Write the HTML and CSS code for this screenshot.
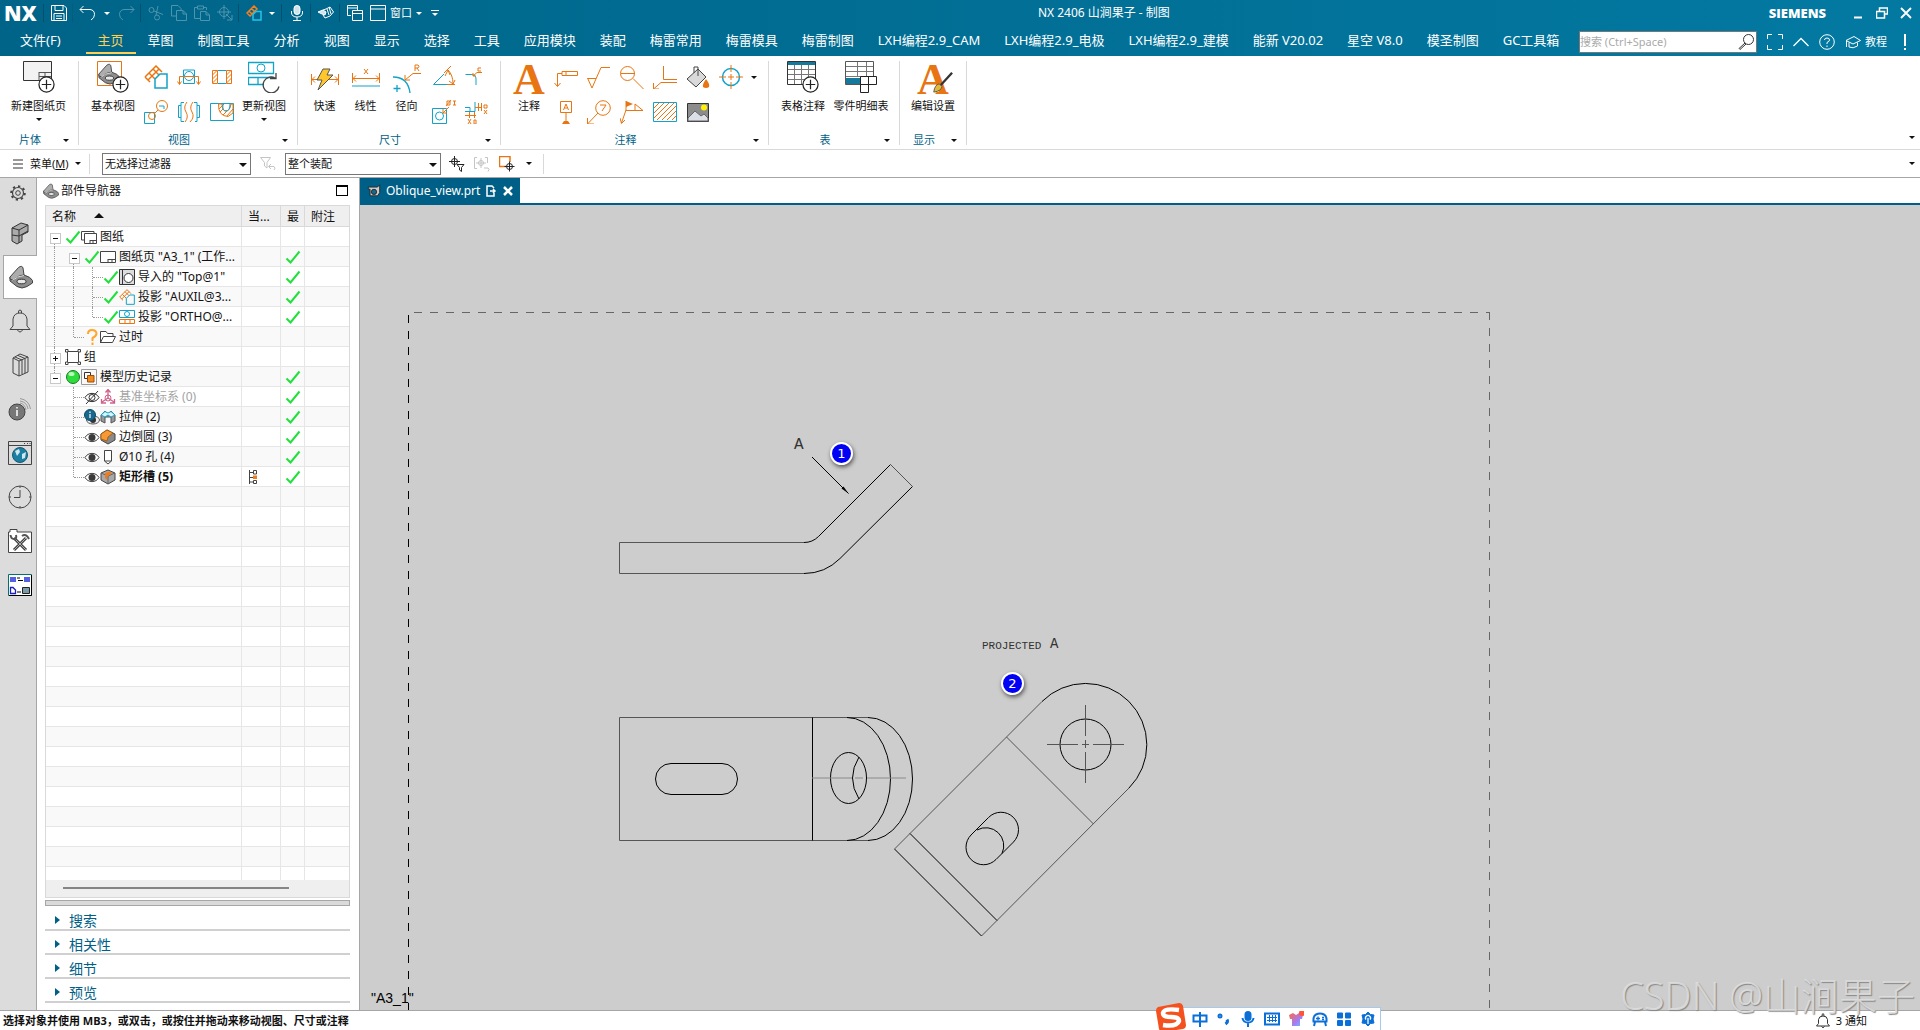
FILE: index.html
```html
<!DOCTYPE html>
<html lang="zh-CN">
<head>
  <meta charset="UTF-8">
  <meta name="viewport" content="width=device-width, initial-scale=1">
  <title>NX 2406 山涧果子 - 制图</title>
  <link rel="stylesheet" href="styles.css">
</head>
<body>
  <!-- shared icons -->
  <svg class="defs" width="0" height="0">
    <symbol id="check" viewBox="0 0 16 16"><path d="M1.500 9.500 5.500 13.500 14.500 2.500" fill="none" stroke="#22e03c" stroke-width="2"/></symbol>
    <symbol id="eye" viewBox="0 0 16 16"><path d="M1 8.500C4 3 12 3 15 8.500 12 14 4 14 1 8.500Z" fill="#fff" stroke="#444"/><circle cx="8" cy="8.500" r="3.500" fill="#3a3a3a"/></symbol>
    <symbol id="part" viewBox="0 0 24 24"><path d="M1 12 15 10Q22 12 23.500 15.500V18L18 21.500Q13 24.500 8 21.500L1 16Z" fill="#8d8d8d" stroke="#444"/><path d="M1 12 9.500 2.500Q13 0 14 3L15 10Q8 10.500 4.500 15.500L1 14Z" fill="#adadad" stroke="#444"/><path d="M3.500 15.500Q8 11 15 10.500" fill="none" stroke="#ddd"/><ellipse cx="12.500" cy="16.500" rx="4.500" ry="2.300" fill="#e8e8e8" stroke="#333"/></symbol>
    <symbol id="auxil" viewBox="0 0 24 24"><path d="M1 12 12 1 18 7M1 12 6 17M4 15 15 4M5 8 11 14M9 4 15 10" fill="none" stroke="#e87511" stroke-width="1.500"/><path d="M11 14 16 9H23V23H11Z" fill="none" stroke="#13a3c9" stroke-width="1.500"/></symbol>
    <symbol id="plusball" viewBox="0 0 18 18"><circle cx="9" cy="9" r="8" fill="#fff" stroke="#222" stroke-width="1.300"/><path d="M9 4V14M4 9H14" stroke="#222" stroke-width="1.300"/></symbol>
  </svg>

  <div class="app">
    <header class="top">
      <div class="titlebar">
        <span class="nx">NX</span>
        <i class="sep"></i>
        <button class="qa" aria-label="保存"><svg viewBox="0 0 16 16"><path d="M.5.5H13L15.500 3V15.500H.5ZM4 .5V5.500H12V.5M3 15V8.500H13V15M5 11H11M5 13.500H11"/></svg></button>
        <i class="sep faint"></i>
        <button class="qa" aria-label="撤消"><svg viewBox="0 0 16 16"><path d="M4.500 1 1 4.500 4.500 8M1 4.500H11Q15.500 5 15.500 9.500 15.500 13 12 15"/></svg></button>
        <button class="drop"><i class="caret"></i></button>
        <button class="qa dim" aria-label="重做"><svg viewBox="0 0 16 16"><path d="M11.500 1 15 4.500 11.500 8M15 4.500H5Q.5 5 .5 9.500 .5 13 4 15"/></svg></button>
        <i class="sep"></i>
        <button class="qa dim" aria-label="剪切"><svg viewBox="0 0 16 16"><circle cx="3.500" cy="5" r="2.500"/><circle cx="9" cy="12.500" r="2.500"/><path d="M6 6 15 9.500M8 10 10 1"/></svg></button>
        <button class="qa dim" aria-label="复制"><svg viewBox="0 0 16 16"><path d="M5 11H.5V.5H7L10 3.500V5M5.500 5.500H12L15.500 9V15.500H5.500ZM12 5.500V9H15.500"/></svg></button>
        <button class="qa dim" aria-label="粘贴"><svg viewBox="0 0 16 16"><path d="M6 13.500H.5V2.500H3M10 2.500H12.500V5M3.500 1H9.500V4H3.500ZM6.500 6.500H12L15.500 10V15.500H6.500ZM12 6.500V10H15.500"/></svg></button>
        <button class="qa dim" aria-label="重复"><svg viewBox="0 0 16 16"><circle cx="7" cy="7" r="4.500"/><path d="M7 0V14M0 7H14M9 9 15 15M15 10V15H10"/></svg></button>
        <i class="sep"></i>
        <button class="qa"><svg viewBox="0 0 16 16"><path d="M1 8 8 1 11 4 4 11ZM3 6 6 9M5.500 3.500 8.500 6.500" stroke="#f58220" stroke-width="1.500"/><path d="M7 9.500 10 6.500H15V15H7Z" stroke="#22c3ee" stroke-width="1.500"/></svg></button>
        <button class="drop narrow"><i class="caret"></i></button>
        <i class="sep"></i>
        <button class="qa" aria-label="语音"><svg viewBox="0 0 16 16"><rect x="5" y=".5" width="6" height="9" rx="3" fill="#cfe3ea"/><path d="M2.500 6V8Q3 12 8 12T13.500 8V6M8 12V15M4 15.500H12"/></svg></button>
        <i class="sep"></i>
        <button class="qa" aria-label="触摸"><svg viewBox="0 0 16 16"><path d="M0 7 5 5 8 7 7 10 4 9Z" fill="#cfe3ea"/><path d="M5 5 8 4 12 2 15.500 7 12 11 7 13 5 10M11 2 13 9M9 4 11 10"/></svg></button>
        <i class="sep"></i>
        <button class="qa" aria-label="层叠"><svg viewBox="0 0 16 16"><path d="M4 10.500H.5V.5H10.500V5M.5 3H10.500M5.500 5.500H15.500V15.500H5.500ZM5.500 8.500H15.500"/></svg></button>
        <button class="qa win"><svg viewBox="0 0 16 16"><path d="M.5.5H15.500V15.500H.5ZM.5 4H15.500"/></svg>窗口</button>
        <button class="drop narrow"><i class="caret"></i></button>
        <button class="drop"><i class="bar"></i><i class="caret"></i></button>
        <h1>NX 2406 山涧果子 - 制图</h1>
        <span class="siemens">SIEMENS</span>
        <div class="wincontrols">
          <button aria-label="最小化"><svg viewBox="0 0 12 12"><path d="M2 10.500H10" stroke-width="2"/></svg></button>
          <button aria-label="还原"><svg viewBox="0 0 12 12"><path d="M3.500 4V1H11.500V7H9M.5 4.500H8.500V11H.5Z" stroke-width="1.500"/></svg></button>
          <button aria-label="关闭"><svg viewBox="0 0 12 12"><path d="M1 1 11 11M11 1 1 11" stroke-width="1.800"/></svg></button>
        </div>
      </div>

      <nav class="tabs">
        <button class="file">文件(F)</button>
        <button class="active">主页</button>
        <button>草图</button>
        <button>制图工具</button>
        <button>分析</button>
        <button>视图</button>
        <button>显示</button>
        <button>选择</button>
        <button>工具</button>
        <button>应用模块</button>
        <button>装配</button>
        <button>梅雷常用</button>
        <button>梅雷模具</button>
        <button>梅雷制图</button>
        <button>LXH编程2.9_CAM</button>
        <button>LXH编程2.9_电极</button>
        <button>LXH编程2.9_建模</button>
        <button>能新 V20.02</button>
        <button>星空 V8.0</button>
        <button>模圣制图</button>
        <button>GC工具箱</button>
        <div class="tools">
          <label class="search">
            <input type="text" placeholder="搜索 (Ctrl+Space)" aria-label="搜索">
            <svg viewBox="0 0 16 16"><circle cx="10.500" cy="5.500" r="5"/><path d="M7 9 1 14.500 2 15.500 8 10"/></svg>
          </label>
          <button aria-label="全屏"><svg viewBox="0 0 16 16"><path d="M.5 5V.5H5M11 .5H15.500V5M15.500 11V15.500H11M5 15.500H.5V11"/></svg></button>
          <button aria-label="折叠"><svg viewBox="0 0 16 16"><path d="M.5 12 8 4.500 15.500 12" stroke-width="1.300"/></svg></button>
          <button aria-label="帮助"><svg viewBox="0 0 16 16"><circle cx="8" cy="8" r="7.300"/><path d="M5.500 6Q5.500 4 8 4T10.500 6Q10.500 7.500 8 8.500V10M8 11.500V13"/></svg></button>
          <button class="learn"><svg viewBox="0 0 16 16"><path d="M1 6.500 9 2.500 15.500 6.500 8 10ZM4 8.500V13Q8 15 12.500 12V8.500M1.500 7V13"/></svg>教程</button>
          <button aria-label="提醒"><svg viewBox="0 0 16 16"><path d="M8 0V12M8 14V16" stroke-width="2"/></svg></button>
        </div>
      </nav>
    </header>

    <div class="ribbon">
      <section class="group sheet">
        <div class="cmds">
          <button class="big"><svg viewBox="0 0 32 32"><path d="M.5.5H28.500V19.500H.5Z" fill="#f2f2f2" stroke="#333"/><path d="M16 11.500H28M16 15.500H28M16 11V19M22 11V15" stroke="#555"/><use href="#plusball" x="15" y="15" width="17" height="17"/></svg>新建图纸页<i class="caret"></i></button>
        </div>
        <footer><span>片体</span><i class="caret"></i></footer>
      </section>
      <section class="group views">
        <div class="cmds">
          <button class="big w52"><svg viewBox="0 0 32 32"><path d="M.5.5H24.500V24.500H.5Z" fill="#fff" stroke="#e87511"/><use href="#part" x="1" y="2" width="22" height="22"/><use href="#plusball" x="15" y="15" width="17" height="17"/></svg>基本视图</button>
          <div class="grid">
            <button><svg viewBox="0 0 24 24"><use href="#auxil"/></svg></button>
            <button><svg viewBox="0 0 24 24"><path class="c" d="M6.500 5V18.500H17.500V5Z"/><circle class="c" cx="12" cy="11" r="4.500"/><path class="o" d="M2.500 19V11.500H21.500V19M.5 16.500 2.500 19.500 4.500 16.500M19.500 16.500 21.500 19.500 23.500 16.500"/></svg></button>
            <button><svg viewBox="0 0 24 24"><path class="o" d="M2.500 5.500H7.500V18.500H2.500ZM16.500 5.500H21.500V18.500H16.500ZM2.500 10 7 5.500M2.500 14 7.500 9M2.500 18 7.500 13M16.500 10 21 5.500M16.500 14 21.500 9M16.500 18 21.500 13"/><path class="c" d="M8 5.500H16M8 18.500H16"/></svg></button>
            <button><svg viewBox="0 0 24 24"><path class="c" d="M.5 12.500H10.500V23.500H.5ZM15 6H20V9"/><circle class="o" cx="18" cy="6" r="5.500"/><circle class="o" cx="8" cy="16" r="3.500"/><path class="o" d="M10.500 13.500 14 10"/></svg></button>
            <button><svg viewBox="0 0 24 24"><path class="c" d="M4 5.500H1.500V17.500H4M7 21.500H4V2.500H7M18 21.500H20V2.500H17M20 5.500H22.500V17.500H20"/><path class="o" d="M10 2Q6 7 9 12T8 22M16 2Q12 7 15 12T13 22"/></svg></button>
            <button><svg viewBox="0 0 24 24"><path class="c" d="M.5 3.500H23.500V20.500H.5Z"/><path class="o" d="M8.500 4Q8 16 18 16.500L23 13V4H21Q20 11 16 11T12 4ZM9 9 14 4M10 12 13 9M13 15 17 11M17 16 23 9"/><path class="c" d="M13 4Q12 11 16 11T20 4"/></svg></button>
          </div>
          <button class="big w52"><svg viewBox="0 0 32 32"><path class="c" d="M.5 1.500H25.500V12.500H.5ZM.5 16.500H25.500M.5 16V23.500H16M10 16V23" stroke-width="1.300"/><circle class="c" cx="13" cy="7" r="4"/><path d="M28 17.500A8 8 0 1 0 31 25.500M28 12V17.500H22" fill="none" stroke="#444" stroke-width="1.300"/></svg>更新视图<i class="caret"></i></button>
        </div>
        <footer><span>视图</span><i class="caret"></i></footer>
      </section>
      <section class="group">
        <div class="cmds">
          <button class="big w41"><svg viewBox="0 0 32 32"><path class="o" d="M2.500 13V24M29.500 13V24M3 18.500H29M6 15.500 3 18.500 6 21.500M26 15.500 29 18.500 26 21.500"/><path d="M14 8H21L18 14H24L9 29 13 19H8Z" fill="#ffc72c" stroke="#555"/></svg>快速</button>
          <button class="big w41"><svg viewBox="0 0 32 32"><path class="o" d="M2.500 12V22M29.500 12V22M3 17.500H29M6 14.500 3 17.500 6 20.500M26 14.500 29 17.500 26 20.500M14 8 18 13M18 8 14 13"/><path class="c" d="M2 25H30"/></svg>线性</button>
          <button class="big w41"><svg viewBox="0 0 32 32"><path class="o" d="M30 12.500H22L14 19M14 14V19H19M24 10V4H27Q29 5 27 7H24M26 7 28 10"/><path class="c" d="M2 16Q17 16 19 32M6 24V31M2.500 27.500H9.500" stroke-width="1.300"/></svg>径向</button>
          <div class="grid two">
            <button><svg viewBox="0 0 24 24"><path class="c" d="M12 9 1.500 19.500H15"/><path class="o" d="M12 8 19 1M16 5Q21 10 21 19M13 11 16 5 18 10M17 16 21 19 23 15M15 19.500H23"/></svg></button>
            <button><svg viewBox="0 0 24 24"><path class="c" d="M.5 9.500H6Q11 9.500 11 14V20"/><path class="o" d="M17 7.500H12L8 11M8 8V11H11M16 3H13V6H16"/></svg></button>
            <button><svg viewBox="0 0 24 24"><path class="c" d="M.5 8.500H14.500V23.500H.5Z"/><circle class="c" cx="7.500" cy="16" r="4"/><path class="o" d="M17 7 11 13M11 9V13H15M14 6 19 0M15 1H18V5H15ZM21 1H24M22.500 1V5M21 5H24"/></svg></button>
            <button><svg viewBox="0 0 24 24"><path class="c" d="M0 7.500H5V11.500H10V2M0 11.500H5"/><path class="o" d="M10 7.500H17M13.500 3V11M16.500 3V11M0 15.500H11M4.500 12V18M9.500 12V18M19 5H22V8H19ZM19 10 22 14M22 10 19 14M3 19 6 24M6 19 3 24M9 20H11V24H9Z"/></svg></button>
          </div>
        </div>
        <footer><span>尺寸</span><i class="caret"></i></footer>
      </section>
      <section class="group notes">
        <div class="cmds">
          <button class="big w40"><span class="bigA">A</span>注释</button>
          <div class="grid six">
            <button><svg viewBox="0 0 24 24"><path class="o" d="M8 6.500H23.500V10.500H8ZM12 6V10M8 8.500H3.500V21M.5 18 3.500 21.500 6.500 18"/></svg></button>
            <button><svg viewBox="0 0 24 24"><path class="o" d="M.5 13.500H9M.5 13 5 23 14 2.500H23"/></svg></button>
            <button><svg viewBox="0 0 24 24"><circle class="o" cx="7.500" cy="8.500" r="7"/><path class="o" d="M1 8.500H15M13 13.500 23.500 24"/></svg></button>
            <button><svg viewBox="0 0 24 24"><path class="o" d="M10.500 1V14.500H24M24 17.500H8L.5 24M.5 18V24H6"/></svg></button>
            <button><svg viewBox="0 0 24 24"><path d="M1 14 12 4 20 12 10 22Z" fill="#d9d9d9" stroke="#444"/><path d="M8 8V2H12V11" fill="none" stroke="#444"/><path d="M20 14Q16 20 17 22 20 24 23 22 24 19 20 14Z" fill="#e87511"/></svg></button>
            <button><svg viewBox="0 0 24 24"><circle class="c" cx="12" cy="12" r="8.500" stroke-width="1.500"/><path class="o" d="M12 0V7M12 17V24M0 12H7M17 12H24M12 9V15M9 12H15"/></svg></button>
            <button><svg viewBox="0 0 24 24"><path class="o" d="M6.500 1.500H17.500V12.500H6.500ZM12 13V21M9.500 10 12 4 14.500 10M10.500 8H13.500"/><path d="M8 24 10 21H14L16 24Z" fill="#e87511"/></svg></button>
            <button><svg viewBox="0 0 24 24"><circle class="o" cx="16" cy="8" r="7.300"/><path class="o" d="M11 13 .5 24M.5 18V24H7M13 5H19L15 11"/></svg></button>
            <button><svg viewBox="0 0 24 24"><path d="M6 1 13 4 6 7Z" fill="#e87511"/><path class="o" d="M6 1V10.500H23L15 4V10M6 10 1.500 23M0 18 1.500 23.500 5 20"/></svg></button>
            <button><svg viewBox="0 0 24 24"><path class="o" d="M1 8 6 3M1 13 11 3M1 18 16 3M4 20 21 3M9 20 23 6M14 20 23 11M19 20 23 16"/><path class="c" d="M.5 2.500H23.500V21.500H.5Z"/></svg></button>
            <button><svg viewBox="0 0 24 24"><path d="M1.500 3.500H22.500V21.500H1.500Z" fill="#8c8c8c" stroke="#333"/><path d="M2 18 9 11 15 16 18 14 22 18V21H2Z" fill="#dcdfe8" stroke="#666"/><circle cx="18" cy="7.500" r="3" fill="#fff200"/></svg></button>
          </div>
          <button class="more" aria-label="更多"><i class="caret"></i></button>
        </div>
        <footer><span>注释</span><i class="caret"></i></footer>
      </section>
      <section class="group tables">
        <div class="cmds">
          <button class="big w58"><svg viewBox="0 0 32 32"><path d="M.5.5H28.500V23.500H.5Z" fill="#fff" stroke="#333"/><path d="M1 1H28V4H1Z" fill="#16799c"/><path d="M1 8.500H28M1 13.500H28M1 18.500H28M7.500 4V23M14.500 4V23M21.500 4V23" stroke="#777"/><use href="#plusball" x="15" y="15" width="17" height="17"/></svg>表格注释</button>
          <button class="big w58"><svg viewBox="0 0 32 32"><path d="M.5.5H28.500V23.500H.5Z" fill="#fff" stroke="#555"/><path d="M1 17H15V23H1Z" fill="#16799c"/><path d="M1 5.500H28M1 10.500H28M1 15.500H28M12.500 1V15M21.500 1V15" stroke="#777"/><path d="M15.500 15.500H31.500V23.500H15.500ZM15.500 23.500H23.500V31.500H15.500ZM23.500 15V23" fill="#fff" stroke="#222"/></svg>零件明细表</button>
        </div>
        <footer><span>表</span><i class="caret"></i></footer>
      </section>
      <section class="group display">
        <div class="cmds">
          <button class="big w58"><span class="bigA">A</span><svg class="brush" viewBox="0 0 24 24"><path d="M23 2 10 16" stroke="#333" stroke-width="2.500"/><path d="M3 23Q4 15 9 14L12 17Q11 22 3 23Z" fill="#e2b93b" stroke="#555"/></svg>编辑设置</button>
        </div>
        <footer><span>显示</span><i class="caret"></i></footer>
      </section>
      <button class="ribbonmore" aria-label="功能区选项"><i class="caret"></i></button>
    </div>

    <div class="selbar">
      <button class="menu"><svg viewBox="0 0 10 10"><path d="M0 1H10M0 5H10M0 9H10" stroke="#333"/></svg>菜单(<u>M</u>)<i class="caret"></i></button>
      <i class="vsep"></i>
      <span class="combo filter"><select aria-label="选择过滤器"><option>无选择过滤器</option></select></span>
      <button class="selicon gray"><svg viewBox="0 0 16 16"><path d="M.5 1.500H10.500L7 6.500V12L4.500 10V6.500ZM9 10.500H14Q16 12 14 14M11 8 8.500 10.500 11 13"/></svg></button>
      <span class="combo scope"><select aria-label="选择范围"><option>整个装配</option></select></span>
      <button class="selicon"><svg viewBox="0 0 16 16"><circle cx="5.500" cy="5.500" r="3"/><path d="M5.500 0V11M0 5.500H11M8 8.500H15L12.500 11.500V15.500L10.500 14V11.500Z"/></svg></button>
      <button class="selicon gray"><svg viewBox="0 0 16 16"><path d="M3 1.500H.5V12.500H3M11 1.500H13.500V7M10 12H14Q16 13 14 15.500"/><circle cx="7" cy="7" r="2.500"/><path d="M7 2V12M2 7H12"/></svg></button>
      <button class="selicon"><svg viewBox="0 0 16 16"><path class="o" d="M7 10.500H.5V.5H11V6" stroke-width="1.500"/><circle cx="10.500" cy="10.500" r="3"/><path d="M10.500 5.500V15.500M5.500 10.500H15.500"/></svg></button>
      <button class="drop"><i class="caret"></i></button>
      <i class="vsep"></i>
      <button class="drop last"><i class="caret"></i></button>
    </div>

    <main>
      <aside class="rail">
        <button class="gear" aria-label="设置"><svg viewBox="0 0 16 16"><circle cx="8" cy="8" r="5.500" stroke-width="1.200"/><circle cx="8" cy="8" r="6.800" stroke-width="2" stroke-dasharray="2.300 3"/><circle cx="8" cy="8" r="2.300"/></svg></button>
        <button><svg viewBox="0 0 24 24"><path d="M4 7 13 2 20 4V11L14 14V20L9 23 4 20Z" fill="#aaa" stroke="#333"/><path d="M4 7 11 9 20 4M11 9V22M4 14 11 15 20 10" fill="none" stroke="#333"/></svg></button>
        <button class="on"><svg viewBox="0 0 24 24"><use href="#part"/></svg></button>
        <button aria-label="通知"><svg viewBox="0 0 24 24"><path d="M2 20.500H22L19 17V10Q18 4 12 4T5 10V17L2 20.500M9.500 21Q12 25 14.500 21M10.500 4Q10 1 12 1T13.500 4"/></svg></button>
        <button><svg viewBox="0 0 24 24"><path d="M5 5 11 8V23L5 20ZM5 5 12 1 20 4V19L11 23M11 8 20 4M7 4 14 7V21M10 2.500 17 5.500V20"/></svg></button>
        <button><svg viewBox="0 0 24 24"><circle cx="9" cy="15" r="8" fill="#777"/><path d="M9 13V19M9 10V11.500" stroke="#fff" stroke-width="1.500"/><path d="M12 6Q17 7 18 13M12 4Q19 5 20 12M12 1.500Q21 3 22.500 12" stroke="#999"/></svg></button>
        <button><svg viewBox="0 0 24 24"><path d="M.5.5H23.500V23.500H.5ZM.5 4.500H23.500M16 2.500H17M19 2.500H20M21.500 2.500H22.500"/><circle cx="12" cy="14" r="7.500" fill="#1d7ea3" stroke="#155a75"/><path d="M7 10 11 8 12 11 9 15ZM14 13 18 11 17 17 14 18Z" fill="#cfe8f0" stroke="none"/></svg></button>
        <button aria-label="历史记录"><svg viewBox="0 0 24 24"><circle cx="12" cy="12" r="11"/><path d="M12 5V12.500H6M12 1V3M12 21V23M1 12H3M21 12H23"/></svg></button>
        <button><svg viewBox="0 0 24 24"><path d="M.5 3V23.500H23.500V3H9V.5H2V3Z" fill="#fff"/><path d="M6 9 18 21M18 9 6 21" stroke="#444" stroke-width="3"/><path d="M6 9 18 21M18 9 6 21" stroke="#aaa"/><path d="M2.500 6Q3 10 6 10T8 6M14 7Q18 4 21 10" stroke="#555" stroke-width="2"/></svg></button>
        <button><svg viewBox="0 0 24 24"><path d="M.5 1.500H23.500V22.500H.5Z" fill="#fff" stroke="#007070"/><path d="M1 22.500H23.500V2" stroke="#000"/><path d="M2 4H8V9H2ZM16 4H22V9H16Z" fill="#5560e0" stroke="none"/><path d="M9 5H12M10 7.500H15M9 19H13" stroke="#000"/><path d="M2.500 14.500H5L7.500 17V20.500H2.500Z" fill="#fff" stroke="#1c1cc0" stroke-width="1.300"/><path d="M14.500 14.500H21.500V20.500H14.500Z" fill="#7b9aa8" stroke="#222"/></svg></button>
      </aside>

      <section class="navigator">
        <div class="navhead"><svg viewBox="0 0 24 24"><use href="#part"/></svg><h2>部件导航器</h2><button aria-label="最大化"></button></div>
        <div class="treebox">
          <div class="treescroll">
            <table>
              <colgroup><col><col class="c2"><col class="c3"><col class="c4"></colgroup>
              <thead><tr><th>名称<i class="sort"></i></th><th>当...</th><th>最</th><th>附注</th></tr></thead>
              <tbody>
                <tr><td><div class="node"><i class="g box first"></i><svg><use href="#check"/></svg><svg viewBox="0 0 16 16"><path d="M3 11H.5V2.500H13V4" fill="none" stroke="#444"/><path d="M3.500 4.500H15.500V14.500H3.500ZM9 11.500H15M9 11V14M12 11V14" fill="#fff" stroke="#444"/></svg><span>图纸</span></div></td><td></td><td></td><td></td></tr>
                <tr><td><div class="node"><i class="g v"></i><i class="g box first"></i><svg><use href="#check"/></svg><svg viewBox="0 0 16 16"><path d="M.5 2.500H15.500V13.500H.5ZM8 10.500H15M8 10V13M12 10V13" fill="#fff" stroke="#444"/></svg><span>图纸页 "A3_1" (工作...</span></div></td><td></td><td><svg><use href="#check"/></svg></td><td></td></tr>
                <tr><td><div class="node"><i class="g v"></i><i class="g v"></i><i class="g v t"></i><svg><use href="#check"/></svg><svg viewBox="0 0 16 16"><path d="M.5.5H15.500V15.500H.5Z" fill="#ddd" stroke="#333"/><path d="M3.500 1V15" stroke="#333"/><circle cx="9.500" cy="9" r="4.500" fill="#fff" stroke="#333"/></svg><span>导入的 "Top@1"</span></div></td><td></td><td><svg><use href="#check"/></svg></td><td></td></tr>
                <tr><td><div class="node"><i class="g v"></i><i class="g v"></i><i class="g v t"></i><svg><use href="#check"/></svg><svg viewBox="0 0 24 24"><use href="#auxil"/></svg><span>投影 "AUXIL@3...</span></div></td><td></td><td><svg><use href="#check"/></svg></td><td></td></tr>
                <tr><td><div class="node"><i class="g v"></i><i class="g v"></i><i class="g v l t"></i><svg><use href="#check"/></svg><svg viewBox="0 0 16 16"><path class="c" d="M.5 1.500H15.500V8.500H.5Z"/><circle class="c" cx="8" cy="5" r="2.500"/><path class="o" d="M.5 10.500H15.500V14.500H.5ZM6 10V14M11 10V14"/></svg><span>投影 "ORTHO@...</span></div></td><td></td><td><svg><use href="#check"/></svg></td><td></td></tr>
                <tr><td><div class="node"><i class="g v"></i><i class="g v l t"></i><svg viewBox="0 0 16 16"><path d="M4 5Q4 1 8 1T12.500 4.500Q12.500 7 8.500 9V12M8.500 13.500V16" fill="none" stroke="#ffa72b" stroke-width="2"/></svg><svg viewBox="0 0 16 16"><path d="M.5 14V2.500H6L7.500 4.500H13V7M.5 13.500 3.500 7.500H15.500L12.500 13.500Z" fill="#fff" stroke="#444"/></svg><span>过时</span></div></td><td></td><td></td><td></td></tr>
                <tr><td><div class="node"><i class="g box plus"></i><svg viewBox="0 0 16 16"><path d="M2.500 2.500H13.500V13.500H2.500Z" fill="none" stroke="#444"/><path d="M.5.5H3V3H.5ZM13 .5H15.500V3H13ZM.5 13H3V15.500H.5ZM13 13H15.500V15.500H13Z" fill="#fff" stroke="#444"/></svg><span>组</span></div></td><td></td><td></td><td></td></tr>
                <tr><td><div class="node"><i class="g box end"></i><svg viewBox="0 0 16 16"><circle cx="8" cy="8" r="6.500" fill="#2fdc3d" stroke="#187a20"/><ellipse cx="6.500" cy="5" rx="3" ry="2" fill="#b6ffb9"/></svg><svg viewBox="0 0 16 16"><path d="M.5.5H15.500V15.500H.5Z" fill="none" stroke="#999"/><path d="M3.500 3.500H9.500V9.500H3.500Z" fill="#fff" stroke="#333"/><path d="M6.500 6.500H13V13H6.500Z" fill="#f08a1d" stroke="#a34b00"/></svg><span>模型历史记录</span></div></td><td></td><td><svg><use href="#check"/></svg></td><td></td></tr>
                <tr><td><div class="node off"><i class="g"></i><i class="g v t"></i><svg viewBox="0 0 16 16"><path d="M1 8.500C4 3 12 3 15 8.500 12 14 4 14 1 8.500ZM2 15 14 2" fill="none" stroke="#333"/><circle cx="8" cy="8.500" r="3" fill="none" stroke="#333"/></svg><svg viewBox="0 0 16 16"><path d="M8 9V2M8 9 2 13M8 9 14 13M5.500 3.500 8 .5 10.500 3.500M1.500 10V14H6M14.500 10V14H10" fill="none" stroke="#d0608a" stroke-width="1.300"/><circle cx="8" cy="9" r="3" fill="none" stroke="#d0608a"/></svg><span>基准坐标系 (0)</span></div></td><td></td><td><svg><use href="#check"/></svg></td><td></td></tr>
                <tr><td><div class="node"><i class="g"></i><i class="g v t"></i><svg viewBox="0 0 16 16"><ellipse cx="9" cy="11" rx="6.500" ry="4" fill="#eee" stroke="#555"/><circle cx="9" cy="11" r="3" fill="#333"/><circle cx="6" cy="6" r="5.500" fill="#17688c" stroke="#0d4b68"/><path d="M6 5V9M6 2.500V4" stroke="#fff" stroke-width="1.200"/></svg><svg viewBox="0 0 16 16"><path d="M1 6 5 2 8 5 11 2 15 6V12L11 14V8H5V14L1 12Z" fill="#9a9a9a" stroke="#555"/><path d="M1 6 5 2.500 8 4 11 2.500 15 6 11 8 8 6 5 8Z" fill="#d8f4fa" stroke="#13a3c9"/></svg><span>拉伸 (2)</span></div></td><td></td><td><svg><use href="#check"/></svg></td><td></td></tr>
                <tr><td><div class="node"><i class="g"></i><i class="g v t"></i><svg><use href="#eye"/></svg><svg viewBox="0 0 16 16"><path d="M1 5 7 1 15 5V11L8 15 1 11Z" fill="#8a8a8a" stroke="#444"/><path d="M1 5 7 1 13 4 8 8 7 12 1 10Z" fill="#f79a35" stroke="#a85400" stroke-width=".8"/></svg><span>边倒圆 (3)</span></div></td><td></td><td><svg><use href="#check"/></svg></td><td></td></tr>
                <tr><td><div class="node"><i class="g"></i><i class="g v t"></i><svg><use href="#eye"/></svg><svg viewBox="0 0 16 16"><path d="M4.500 1.500H11.500V12L8 15 4.500 12ZM4.500 12H11.500" fill="#fff" stroke="#444"/></svg><span>Ø10 孔 (4)</span></div></td><td></td><td><svg><use href="#check"/></svg></td><td></td></tr>
                <tr><td><div class="node bold"><i class="g"></i><i class="g v l t"></i><svg><use href="#eye"/></svg><svg viewBox="0 0 16 16"><path d="M1 4 8 1 15 4V11L8 15 1 11Z" fill="#a9a9a9" stroke="#444"/><path d="M1 4 8 7 15 4M8 7V15" fill="none" stroke="#666"/><path d="M5 4 10 2.500 12 4 7 8V11L5 9Z" fill="#ef7b1a"/></svg><span>矩形槽 (5)</span></div></td><td><svg viewBox="0 0 16 16"><path d="M3.500 1V15M4 3.500H7M4 8.500H7M4 13H7M7.500 1.500H10.500V5H7.500ZM7.500 11.500H10.500V14.500H7.500Z" fill="none" stroke="#444"/><path d="M7 6.500H11V10H7Z" fill="#ef7b1a"/></svg></td><td><svg><use href="#check"/></svg></td><td></td></tr>
                <tr><td></td><td></td><td></td><td></td></tr>
                <tr><td></td><td></td><td></td><td></td></tr>
                <tr><td></td><td></td><td></td><td></td></tr>
                <tr><td></td><td></td><td></td><td></td></tr>
                <tr><td></td><td></td><td></td><td></td></tr>
                <tr><td></td><td></td><td></td><td></td></tr>
                <tr><td></td><td></td><td></td><td></td></tr>
                <tr><td></td><td></td><td></td><td></td></tr>
                <tr><td></td><td></td><td></td><td></td></tr>
                <tr><td></td><td></td><td></td><td></td></tr>
                <tr><td></td><td></td><td></td><td></td></tr>
                <tr><td></td><td></td><td></td><td></td></tr>
                <tr><td></td><td></td><td></td><td></td></tr>
                <tr><td></td><td></td><td></td><td></td></tr>
                <tr><td></td><td></td><td></td><td></td></tr>
                <tr><td></td><td></td><td></td><td></td></tr>
                <tr><td></td><td></td><td></td><td></td></tr>
                <tr><td></td><td></td><td></td><td></td></tr>
                <tr><td></td><td></td><td></td><td></td></tr>
                <tr><td></td><td></td><td></td><td></td></tr>
              </tbody>
            </table>
          </div>
          <div class="hscroll"><i></i></div>
        </div>
        <div class="splitter"></div>
        <div class="accordion">
          <button>搜索</button>
          <button>相关性</button>
          <button>细节</button>
          <button>预览</button>
        </div>
      </section>

      <section class="work">
        <div class="doctabs">
          <button class="doctab"><svg viewBox="0 0 16 16"><path d="M1.500 3.500H12L14.500 1V10L12 13.500H3.500V6H1.500Z" fill="#ccc" stroke="#222"/><circle cx="8" cy="9" r="3" fill="#17688c" stroke="#222"/></svg>Oblique_view.prt<svg class="s12" viewBox="0 0 12 12"><path d="M9 8V11H2V1H7L9 3M5 6H10M8 4 10 6 8 8" fill="none" stroke="#fff" stroke-width="1.500"/></svg><svg class="s12" viewBox="0 0 12 12"><path d="M2 2 10 10M10 2 2 10" fill="none" stroke="#fff" stroke-width="2.500"/></svg></button>
        </div>
        <div class="canvas">
          <svg class="drawing" width="100%" height="100%">
            <g transform="translate(-360 -205)">
              <!-- sheet border -->
              <path d="M414 312.500H1489" class="dash soft"/>
              <path d="M408.500 315V1010" class="dash"/>
              <path d="M1489.500 312V1010" class="dash soft"/>
              <text x="371" y="1003" class="sheetname">"A3_1"</text>
              <!-- side view -->
              <path d="M804 542.500H619.500V573.500H804" class="thin"/>
              <path d="M804 542.500A20.500 20.500 0 0 0 818.500 536.500L890.500 464.500M804 573.500A51 51 0 0 0 840 558.500L912.500 486.500"/>
              <path d="M890.500 464.500 912.500 486.500" class="thin"/>
              <path d="M812 457 848.500 493.500"/>
              <path d="M841.500 488.500 843.500 486.500 848.500 493.500Z" class="head"/>
              <text x="794" y="449" class="viewname">A</text>
              <!-- top view -->
              <path d="M868 717.500H619.500V840.500H868" class="thin"/>
              <path d="M812.500 717.500V840.500M868 717.500A44.500 61.500 0 0 1 868 840.500M847 717.500A43.500 61.500 0 0 1 847 840.500"/>
              <rect x="655.500" y="763.500" width="82" height="31" rx="15.500"/>
              <ellipse cx="848.500" cy="778" rx="18" ry="25.500"/>
              <path d="M859 757Q846 778 859 799"/>
              <path d="M812 778H852M855 778H863M867 778H906" class="center"/>
              <!-- auxiliary view -->
              <path d="M981.500 936 1129 788M1042 701.500 894.500 849M1006.500 737 1093.500 824" class="thin"/>
              <path d="M1042 701.500A61 61 0 0 1 1129 788M894.500 849 981.500 936M910 833.500 997 920.500"/>
              <circle cx="1085.500" cy="744.500" r="25.500"/>
              <path d="M1047 744.500H1078M1082 744.500H1089M1093 744.500H1124M1085.500 705V736M1085.500 740V748M1085.500 752V783" class="thin"/>
              <path d="M971 835 988.500 817.500A17.500 17.500 0 0 1 1013.500 842L996 859.500A17.500 17.500 0 0 1 971 835Z"/>
              <path d="M977 830A18 18 0 0 1 1002 853.500"/>
              <text x="982" y="649" class="note">PROJECTED</text>
              <text x="1050" y="648" class="viewname note2">A</text>
            </g>
          </svg>
          <span class="pin one">1</span>
          <span class="pin two">2</span>
        </div>
      </section>
    </main>

    <footer class="status">
      <p>选择对象并使用 MB3，或双击，或按住并拖动来移动视图、尺寸或注释</p>
      <button><svg viewBox="0 0 16 16"><path d="M1.500 13H14.500L12.500 10.500V6.500Q12 3 8 3T3.500 6.500V10.500L1.500 13M6.500 13.500Q8 16 9.500 13.500M7 3Q7 .5 8 .5T9 3" fill="none" stroke="#333"/></svg>3 通知</button>
    </footer>
  </div>

  <!-- input method bar floating over the status line -->
  <div class="ime">
    <svg class="sogou" viewBox="0 0 32 30"><path d="M3 5 24 1Q27 1 28 4L31 23Q31 26 28 27L8 30Q5 30 4 27L1 9Q1 6 3 5Z" fill="#f4511e"/><path d="M24 8Q9 6 8 11 8 15 16 15T24 19Q22 25 8 23" fill="none" stroke="#fff" stroke-width="4.500"/></svg>
    <svg viewBox="0 0 16 16"><path d="M1.500 4.500H14.500V10.500H1.500ZM8 1V16"/></svg>
    <svg viewBox="0 0 16 16"><circle cx="4" cy="5" r="1.500"/><path d="M11 8.500Q12.500 11 9.500 13" stroke-width="3"/></svg>
    <svg viewBox="0 0 16 16"><rect x="5.500" y="1" width="5" height="8" rx="2.500" fill="#0a6fd8"/><path d="M2.500 7Q3 11.500 8 11.500T13.500 7M8 12V16"/></svg>
    <svg viewBox="0 0 16 16"><path d="M1 2.500H15V13.500H1Z" stroke-width="2"/><path d="M3 6.500H13M3 9.500H13M5.500 4V11M8.500 4V11M11.500 4V11" stroke-width="1"/></svg>
    <svg viewBox="0 0 16 16"><defs><linearGradient id="shirt" x2="1" y2="1"><stop stop-color="#ff6a3c"/><stop offset=".6" stop-color="#a57bf5"/><stop offset="1" stop-color="#5cc8ff"/></linearGradient></defs><path d="M1 4 5 2 8 4 11 2 15 4 14 8H12V15H4V8H2Z" fill="url(#shirt)" stroke="none"/><circle cx="14" cy="2" r="3" fill="#ff5436" stroke="none"/></svg>
    <svg viewBox="0 0 16 16"><path d="M4 3.500Q8 1.500 12 3.500 15 5 14.500 10.500H1.500Q1 5 4 3.500ZM3 11 2 15M13 11 14 15" stroke-width="2"/><path d="M4 7.500H8M6 5.500V9.500M10 6.500H12M10 8.500H12" stroke-width="1.300"/></svg>
    <svg viewBox="0 0 16 16"><path d="M2 2.500H6V6.500H2ZM10 2.500H14V6.500H10ZM2 10H6V14H2ZM10 10H14V14H10Z" fill="#0a6fd8" stroke-linejoin="round"/></svg>
    <svg viewBox="0 0 16 16"><path d="M8 1 10.500 3.500 14 4 13 8 14 12 10.500 12.500 8 15 5.500 12.500 2 12 3 8 2 4 5.500 3.500Z" fill="#0a6fd8" stroke-width="1"/><path d="M8 7V13M6 8.500A2.500 2.500 0 1 1 10 8.500" stroke="#fff" stroke-width="1.300"/></svg>
  </div>
  <div class="watermark">CSDN @山涧果子</div>
</body>
</html>
```
FILE: styles.css
```css
:root {
  --bar: #006488;
  --bar-end: #0379a2;
  --blue: #005f87;
  --orange: #e87511;
  --cyan: #13a3c9;
  --line: #a6a6a6;
  --soft: #d9d9d9;
}
* { box-sizing: border-box; margin: 0; padding: 0; }
body {
  font-family: "Noto Sans", "Noto Sans CJK SC", sans-serif;
  font-size: 12px;
  line-height: 16px;
  color: #111;
  background: #fff;
  overflow: hidden;
}
button {
  font: inherit;
  color: inherit;
  background: none;
  border: none;
}
i { font-style: normal; }
svg { display: block; flex: none; }
.defs { position: absolute; }
.o { fill: none; stroke: var(--orange); }
.c { fill: none; stroke: var(--cyan); }
.app {
  display: flex;
  flex-direction: column;
  height: 100vh;
}
.caret {
  display: block;
  border: 3px solid transparent;
  border-top: 3px solid currentColor;
  border-bottom: none;
}

/* title bar */
.top {
  background: linear-gradient(90deg, var(--bar), var(--bar-end));
  color: #fff;
}
.titlebar {
  display: flex;
  align-items: center;
  height: 28px;
  padding: 0 2px 2px 4px;
}
.nx {
  width: 37px;
  font-family: "Open Sans", sans-serif;
  font-size: 21px;
  line-height: 24px;
  font-weight: 800;
}
.sep {
  width: 1px;
  height: 18px;
  margin: 0 3px 0 2px;
  background: #00506e;
}
.sep.faint { margin: 0 2px; opacity: .3; }
.qa {
  display: flex;
  justify-content: center;
  align-items: center;
  width: 23px;
  height: 24px;
  flex: none;
}
.qa svg { width: 16px; height: 16px; fill: none; stroke: #fff; }
.qa.dim { opacity: .3; }
.qa.win {
  justify-content: flex-start;
  gap: 4px;
  width: 46px;
  padding-left: 4px;
  font-size: 11px;
  white-space: nowrap;
}
.drop {
  display: flex;
  flex-direction: column;
  justify-content: center;
  align-items: center;
  width: 17px;
  height: 24px;
}
.drop.narrow { width: 14px; }
.drop .bar { width: 8px; height: 1px; margin-bottom: 2px; background: #fff; }
.titlebar h1 {
  flex: 1;
  padding-right: 4px;
  font-size: 12px;
  font-weight: 400;
  text-align: center;
}
.siemens {
  margin-right: 20px;
  font-family: "Open Sans", sans-serif;
  font-size: 13px;
  font-weight: 800;
}
.wincontrols { display: flex; }
.wincontrols button { width: 24px; height: 24px; padding: 6px; }
.wincontrols svg { width: 12px; height: 12px; fill: none; stroke: #fff; }

/* ribbon tabs */
.tabs {
  display: flex;
  height: 28px;
  font-size: 13px;
}
.tabs > button {
  padding: 0 12px;
  border-bottom: 2px solid transparent;
  white-space: nowrap;
  margin-bottom: 2px;
}
.tabs > .file { padding: 0 25px 0 20px; }
.tabs > .active { color: #ffd055; border-color: #ffd055; }
.tools {
  display: flex;
  align-items: center;
  margin-left: auto;
  padding-right: 2px;
}
.tools svg { width: 16px; height: 16px; fill: none; stroke: #fff; }
.tools button { padding: 0 5px; }
.search {
  display: flex;
  align-items: center;
  width: 178px;
  height: 22px;
  margin-right: 5px;
  padding-right: 2px;
  background: #fff;
  border: 1px solid #777;
}
.search input {
  flex: 1;
  min-width: 0;
  border: none;
  outline: none;
  font: inherit;
  font-size: 11px;
}
.search input::placeholder { color: #aaa; }
.tools .search svg { stroke: #333; }
.tools .learn { display: flex; align-items: center; gap: 4px; font-size: 11px; }

/* ribbon */
.ribbon {
  display: flex;
  height: 94px;
  padding: 5px 0 4px;
  border-bottom: 1px solid var(--soft);
  font-size: 11px;
}
.group {
  display: flex;
  flex-direction: column;
  justify-content: space-between;
  border-right: 1px solid var(--soft);
}
.sheet { width: 79px; }
.cmds { display: flex; justify-content: center; padding: 0 7px 0 6px; }
.views .cmds, .notes .cmds { padding: 0 7px 0 8px; }
.tables .cmds { padding: 0 9px 0 5px; }
.display .cmds { padding: 0 4px; }
.big {
  position: relative;
  display: flex;
  flex-direction: column;
  align-items: center;
  white-space: nowrap;
}
.big svg { width: 32px; height: 32px; margin-bottom: 5px; }
.big .caret { margin-top: 4px; }
.w40 { width: 40px; }
.w41 { width: 41px; }
.w52 { width: 52px; }
.w58 { width: 58px; }
.bigA {
  height: 37px;
  font-family: "Liberation Serif", serif;
  font-size: 44px;
  line-height: 37px;
  font-weight: 700;
  color: var(--orange);
}
.big .brush { position: absolute; top: 10px; left: 27px; width: 22px; height: 22px; }
.grid {
  display: grid;
  grid-template-columns: repeat(3, 33px);
  grid-auto-rows: 35px;
  margin-top: -2px;
}
.grid.two { grid-template-columns: repeat(2, 33px); }
.grid.six { grid-template-columns: repeat(6, 33px); }
.grid button { display: flex; justify-content: center; align-items: center; }
.grid svg { width: 24px; height: 24px; }
.more { width: 14px; height: 32px; padding: 0 4px; }
.group footer {
  display: flex;
  align-items: center;
  height: 16px;
  margin-bottom: -3px;
  padding-right: 9px;
  color: var(--blue);
}
.group footer span { flex: 1; padding-right: 3px; text-align: center; }
.group footer .caret { color: #111; }
.ribbonmore { margin: auto 5px 6px auto; }

/* selection bar */
.selbar {
  display: flex;
  align-items: center;
  height: 28px;
  border-bottom: 1px solid var(--line);
  font-size: 11px;
}
.menu { display: flex; align-items: center; padding-left: 13px; width: 83px; }
.menu svg { width: 10px; height: 10px; margin-right: 7px; }
.menu .caret { margin-left: 6px; }
.vsep { width: 1px; height: 20px; margin: 0 6px; background: var(--soft); }
.combo { position: relative; height: 22px; }
.filter { width: 149px; margin-left: 6px; }
.scope { width: 156px; margin-right: 4px; }
.combo select {
  width: 100%;
  height: 22px;
  padding: 0 2px;
  appearance: none;
  background: #fff;
  border: 1px solid #777;
  border-radius: 0;
  font: inherit;
  color: #111;
}
.combo::after {
  content: "";
  position: absolute;
  top: 10px;
  right: 4px;
  border: 4px solid transparent;
  border-top-color: #111;
  border-bottom: none;
}
.selicon { padding: 0 4px; margin-right: 1px; }
.filter + .selicon { padding: 0 8px 0 9px; }
.selicon svg { width: 16px; height: 16px; fill: none; stroke: #222; }
.selicon.gray svg { stroke: #c4c4c4; }
.selicon .o { stroke: var(--orange); }
.drop.last { margin-left: auto; }

/* resource bar */
main { display: flex; flex: 1; min-height: 0; }
.rail {
  width: 37px;
  background: #dcdcdc;
  border-right: 1px solid var(--line);
}
.rail button {
  display: flex;
  justify-content: center;
  align-items: center;
  width: 34px;
  height: 44px;
  margin-left: 3px;
}
.rail svg { width: 24px; height: 24px; fill: none; stroke: #444; }
.rail .gear { height: 33px; width: 30px; padding-bottom: 4px; }
.rail .gear svg { width: 16px; height: 16px; }
.rail .on { background: #fff; border: 1px solid var(--line); border-right: none; }

/* part navigator */
.navigator {
  display: flex;
  flex-direction: column;
  width: 323px;
  padding: 0 9px 7px 8px;
  border-right: 1px solid var(--line);
}
.navhead { display: flex; align-items: center; height: 27px; padding: 0 2px 2px 0; }
.navhead svg { width: 16px; height: 16px; margin: 0 2px 0 -2px; }
.navhead h2 { flex: 1; font-size: 12px; font-weight: 400; }
.navhead button { width: 12px; height: 11px; border: 1px solid #000; border-top-width: 2px; }
.treebox {
  flex: 1;
  display: flex;
  flex-direction: column;
  min-height: 0;
  border: 1px solid var(--soft);
}
.treescroll { flex: 1; overflow: hidden; }
table { width: 100%; table-layout: fixed; border-collapse: separate; border-spacing: 0; }
.c2 { width: 39px; }
.c3 { width: 24px; }
.c4 { width: 44px; }
th {
  height: 21px;
  padding: 2px 5px 0 6px;
  background: #efefef;
  border-right: 1px solid var(--soft);
  border-bottom: 1px solid var(--soft);
  font-weight: 400;
  text-align: left;
  white-space: nowrap;
}
th:last-child, td:last-child { border-right: none; }
td {
  height: 20px;
  border-right: 1px solid #e6e6e6;
  border-bottom: 1px solid #e6e6e6;
}
tr:nth-child(even) td { background: #f9f9f9; }
td svg { width: 16px; height: 16px; }
td > svg { margin: 0 4px; }
.sort {
  display: inline-block;
  margin: 0 0 3px 18px;
  border: 5px solid transparent;
  border-top: none;
  border-bottom-color: #111;
}
.node { display: flex; align-items: center; height: 19px; white-space: nowrap; }
.node span { margin-left: 3px; }
.node.off { color: #a3a3a3; }
.node.bold { font-weight: 700; }
.g { position: relative; flex: none; width: 19px; height: 20px; }
/* dotted tree lines, vertical then horizontal */
.v::before, .box::before {
  content: "";
  position: absolute;
  left: 8px;
  top: 0;
  bottom: 0;
  border-left: 1px dotted #999;
}
.box.first::before { top: 10px; }
.l::before, .box.end::before { bottom: 10px; }
.t::after {
  content: "";
  position: absolute;
  left: 9px;
  right: 0;
  top: 10px;
  border-top: 1px dotted #999;
}
.box::after {
  content: "";
  position: absolute;
  left: 4px;
  top: 6px;
  width: 9px;
  height: 9px;
  border: 1px solid #c8c8c8;
  background: linear-gradient(#111, #111) center / 5px 1px no-repeat #fff;
}
.box.plus::after {
  background: linear-gradient(#111, #111) center / 5px 1px no-repeat, linear-gradient(#111, #111) center / 1px 5px no-repeat #fff;
}
.hscroll { height: 17px; padding: 7px 60px 0 17px; background: #efefef; }
.hscroll i { display: block; height: 2px; background: #858585; }
.splitter { height: 6px; margin: 2px 0 1px; background: #dadada; border: 1px solid var(--line); }
.accordion button {
  display: flex;
  align-items: center;
  width: 100%;
  height: 24px;
  padding: 6px 10px 0;
  border-bottom: 2px solid #d0d0d0;
  font-size: 14px;
  color: var(--blue);
}
.accordion button::before {
  content: "";
  margin: 0 9px 3px 0;
  border: 4px solid transparent;
  border-left: 5px solid var(--blue);
  border-right: none;
}

/* work area */
.work { flex: 1; display: flex; flex-direction: column; min-width: 0; }
.doctabs { height: 27px; border-bottom: 2px solid var(--blue); }
.doctab {
  display: flex;
  align-items: center;
  gap: 5px;
  height: 25px;
  width: 160px;
  padding: 0 7px;
  background: var(--blue);
  color: #fff;
}
.doctab svg { width: 14px; height: 14px; }
.doctab .s12 { width: 12px; height: 12px; }
.canvas { position: relative; flex: 1; min-height: 0; background: #cdcdcd; overflow: hidden; }
.drawing { position: absolute; }
.drawing path, .drawing rect, .drawing circle, .drawing ellipse { fill: none; stroke: #000; }
.drawing .thin { stroke: #555; }
.drawing .center { stroke: #8a8a8a; }
.drawing .dash { stroke-dasharray: 8 8; }
.drawing .soft { stroke: #666; }
.drawing .head { fill: #000; stroke: none; }
.sheetname { font: 14px "Liberation Sans", sans-serif; }
.viewname { font: 16px "Liberation Mono", monospace; fill: #333; }
.note { font: 11px "Liberation Mono", monospace; fill: #333; }
.note2 { font-size: 14px; }
.pin {
  position: absolute;
  width: 23px;
  height: 23px;
  border: 2px solid #fff;
  border-radius: 50%;
  background: #0000f5;
  box-shadow: 1px 2px 4px #555;
  color: #fff;
  font: 13px/19px "DejaVu Sans", sans-serif;
  text-align: center;
}
.one { left: 470px; top: 237px; }
.two { left: 641px; top: 467px; }

/* status line */
.status {
  display: flex;
  justify-content: space-between;
  align-items: center;
  height: 20px;
  padding: 0 53px 0 3px;
  border-top: 1px solid var(--line);
  font-size: 11px;
}
.status p { font-weight: 700; }
.status button { display: flex; align-items: center; gap: 5px; }
.status svg { width: 16px; height: 16px; }
.ime {
  position: absolute;
  left: 1171px;
  bottom: 0;
  display: flex;
  align-items: center;
  gap: 8px;
  width: 210px;
  height: 23px;
  padding-left: 20px;
  background: #fff;
  border: 1px solid #a9c9ea;
  border-bottom: none;
}
.ime svg { width: 16px; height: 16px; fill: none; stroke: #0a6fd8; stroke-width: 2; }
.ime .sogou { position: absolute; left: -17px; top: -6px; width: 32px; height: 30px; stroke: none; }
.watermark {
  position: absolute;
  right: 5px;
  bottom: 11px;
  font-size: 38px;
  line-height: 48px;
  font-weight: 300;
  color: rgba(225, 225, 225, .85);
  text-shadow: 1px 1px 1px #888;
  white-space: nowrap;
}
```
